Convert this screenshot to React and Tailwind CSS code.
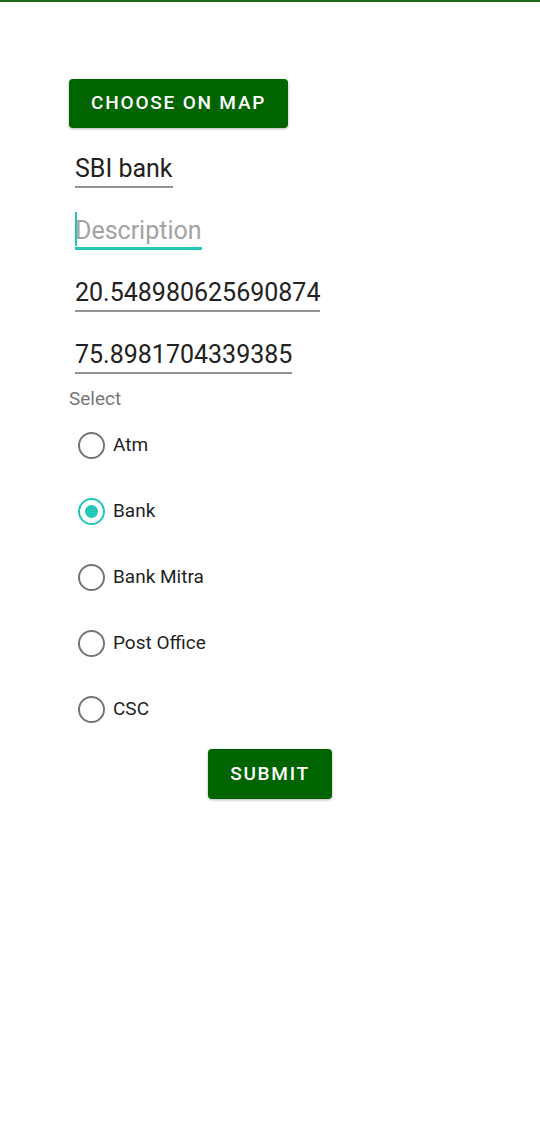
import { useState } from "react";

const options = ["Atm", "Bank", "Bank Mitra", "Post Office", "CSC"];

const Field = ({ value, placeholder, focused }) => (
  <div className="h-[62px]">
    <div
      className={`relative inline-block text-[25px] leading-[30px] pt-[2px] ${
        focused ? "border-b-[3px] border-[#22c7b8] pb-[1px]" : "border-b-2 border-[#939393] pb-[2px]"
      }`}
    >
      {focused && (
        <span className="absolute left-0 top-[-2px] w-[2px] h-[34px] bg-[#22c7b8]" />
      )}
      {value ? (
        <span className="text-[#222]">{value}</span>
      ) : (
        <span className="text-[#a3a3a3]">{placeholder}</span>
      )}
    </div>
  </div>
);

const App = () => {
  const [selected, setSelected] = useState("Bank");

  return (
    <div
      className="min-h-[1134px] w-[540px] bg-white border-t-2 border-[#1b6a1b]"
      style={{ fontFamily: "Roboto, 'Noto Sans', sans-serif" }}
    >
      <div className="pl-[69px] pt-[77px]">
        <button className="h-[49px] px-[22px] bg-[#006400] text-white text-[19px] font-medium tracking-[0.095em] rounded-[4px] shadow-[0_1px_3px_rgba(0,0,0,0.3)]">
          CHOOSE ON MAP
        </button>

        <div className="pl-[6px] pt-[24px]">
          <Field value="SBI bank" />
          <Field placeholder="Description" focused />
          <Field value="20.548980625690874" />
          <Field value="75.8981704339385" />
        </div>

        <div className="mt-[-12px] text-[19px] leading-[22px] text-[#777]">Select</div>

        <div className="pt-[2px]">
          {options.map((opt) => (
            <label
              key={opt}
              className="h-[66px] flex items-center cursor-pointer"
              onClick={() => setSelected(opt)}
            >
              <span className="w-[44px] flex items-center justify-center">
                {selected === opt ? (
                  <span className="w-[27px] h-[27px] rounded-full border-[2.5px] border-[#22c7b8] flex items-center justify-center">
                    <span className="w-[13px] h-[13px] rounded-full bg-[#22c7b8]" />
                  </span>
                ) : (
                  <span className="w-[27px] h-[27px] rounded-full border-[2.5px] border-[#757575]" />
                )}
              </span>
              <span className="text-[19px] text-[#1f1f1f]">{opt}</span>
            </label>
          ))}
        </div>
      </div>

      <div className="flex justify-center mt-[7px]">
        <button className="h-[50px] w-[124px] bg-[#006400] text-white text-[19px] font-medium tracking-[0.09em] rounded-[4px] shadow-[0_1px_3px_rgba(0,0,0,0.3)]">
          SUBMIT
        </button>
      </div>
    </div>
  );
};

export default App;
